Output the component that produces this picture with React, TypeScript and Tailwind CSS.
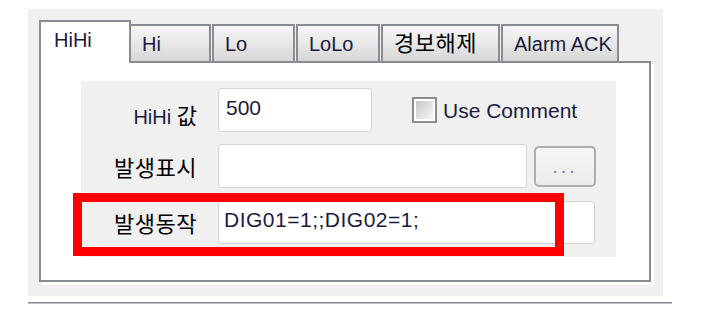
import type { ReactNode } from 'react';

const Tab = ({ w, first, children }: { w: string; first?: boolean; children: ReactNode }) => (
  <div
    className={`${w} ${first ? 'border-l-0' : 'ml-[1px]'} h-[37px] border-2 border-b-0 border-[#898c94] bg-linear-to-b from-[#f5f5f5] via-[#e8e8e8] to-[#d6d6d6] pl-[11px] flex items-center text-[20px] whitespace-nowrap`}
  >
    {children}
  </div>
);

const Label = ({ children, offset }: { children: ReactNode; offset: string }) => (
  <div className={`w-[116px] text-right text-black whitespace-nowrap ${offset}`}>{children}</div>
);

export default function App() {
  return (
    <div className="w-[711px] h-[317px] bg-white font-['Liberation_Sans','Noto_Sans_CJK_KR',sans-serif] text-[#1a1a40] overflow-hidden">
      <div className="ml-[28px] pt-[9px]">
        <div className="w-[635px] h-[287px] bg-[#f0f0f0] pl-[11px] pt-[11px]">
          {/* tab strip */}
          <div className="flex items-end h-[41px]">
            <div className="relative z-10 w-[92px] h-[43px] -mb-[2px] bg-white border-2 border-b-0 border-[#898c94] pl-[13px] pb-[5px] flex items-center text-[20px]">
              HiHi
            </div>
            <Tab w="w-[80px]" first>Hi</Tab>
            <Tab w="w-[83px]">Lo</Tab>
            <Tab w="w-[84px]">LoLo</Tab>
            <Tab w="w-[119px]">
              <span className="text-[22px] tracking-[0.5px] text-black">경보해제</span>
            </Tab>
            <Tab w="w-[118px]">Alarm ACK</Tab>
          </div>

          {/* tab page */}
          <div className="w-[612px] h-[221px] bg-white border-2 border-[#898c94] shadow-[3px_3px_0_0_#ffffff] pl-[40px] pt-[18px]">
            <div className="relative w-[535px] h-[176px] bg-[#f0f0f0] pt-[7px] flex flex-col">
              <div className="flex items-center h-[44px]">
                <Label offset="mt-[12px]">
                  <span className="text-[20px] text-[#1a1a40]">HiHi </span>
                  <span className="text-[22px]">값</span>
                </Label>
                <div className="ml-[21px] w-[154px] h-[44px] bg-white border border-[#d2d3da] rounded-[3px] pl-[7px] pb-[4px] flex items-center text-[21px]">
                  500
                </div>
                <div className="ml-[40px] w-[25px] h-[26px] border-2 border-[#8c8c8c] bg-white p-[2px]">
                  <div className="w-full h-full bg-linear-to-br from-[#c6c6c6] to-[#f6f6f6]" />
                </div>
                <span className="ml-[6px] text-[21px] pt-[2px]">Use Comment</span>
              </div>

              <div className="flex items-center h-[44px] mt-[12px]">
                <Label offset="mt-[5px]">
                  <span className="text-[22px] tracking-[0.5px]">발생표시</span>
                </Label>
                <div className="ml-[21px] w-[309px] h-[44px] bg-white border border-[#d2d3da] rounded-[3px]" />
                <div className="ml-[7px] w-[62px] h-[41px] border-2 border-[#adadad] rounded-[5px] bg-linear-to-b from-[#f6f6f6] to-[#ebebeb] flex items-center justify-center text-[20px] tracking-[3px] text-[#7d80a6]">
                  ...
                </div>
              </div>

              <div className="flex items-center h-[43px] mt-[13px]">
                <Label offset="mt-[3px]">
                  <span className="text-[22px] tracking-[0.5px]">발생동작</span>
                </Label>
                <div className="ml-[21px] w-[377px] h-[43px] bg-white border border-[#d2d3da] rounded-[3px] pl-[5px] pb-[5px] flex items-center text-[21px] tracking-[0.5px] whitespace-nowrap">
                  DIG01=1;;DIG02=1;
                </div>
              </div>

              {/* red highlight */}
              <div className="absolute left-[-8px] top-[112px] w-[491px] h-[63px] border-[9px] border-[#ff0000]" />
            </div>
          </div>
        </div>
        <div className="mt-[6px] w-[644px] h-[2px] bg-[#8c8e96] border-b border-[#bfc0c5]" />
      </div>
    </div>
  );
}
